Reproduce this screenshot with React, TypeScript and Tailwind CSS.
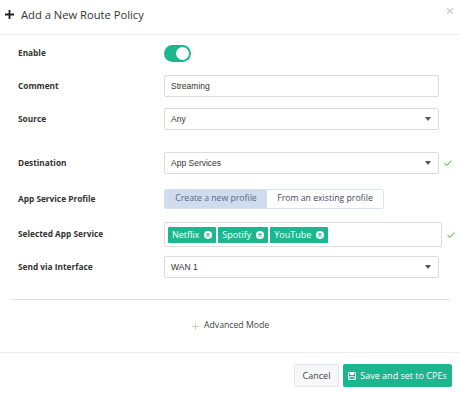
import React from 'react';

const label = 'w-[146px] shrink-0 text-[8.3px] font-bold text-[#333]';
const field =
  'flex h-[22px] w-[275px] shrink-0 items-center rounded-[2px] border border-[#dcdcdc] bg-white px-[6px] text-[8.5px] text-[#333] font-["Liberation_Sans",sans-serif]';

function Caret() {
  return (
    <svg width="6" height="4" viewBox="0 0 6 4" className="ml-auto mr-[1px]">
      <path d="M0 0h6L3 4z" fill="#555" />
    </svg>
  );
}

function Check() {
  return (
    <svg width="8" height="6" viewBox="0 0 8 6" className="ml-[5px] shrink-0">
      <path d="M0.5 3.2L2.8 5.3L7.5 0.7" fill="none" stroke="#6fbf5f" strokeWidth="1.1" />
    </svg>
  );
}

function Tag({ name }: { name: string }) {
  return (
    <span className="flex h-[16px] items-center gap-[5px] rounded-[1px] bg-[#1cb78f] px-[4px] text-[9px] text-white">
      {name}
      <svg width="8" height="8" viewBox="0 0 8 8">
        <circle cx="4" cy="4" r="4" fill="#fff" />
        <path d="M2.5 2.5l3 3M5.5 2.5l-3 3" stroke="#1cb78f" strokeWidth="1.2" />
      </svg>
    </span>
  );
}

export default function App() {
  return (
    <div className="h-[393px] w-[460px] bg-white font-['Open_Sans',sans-serif] text-[#333]">
      <div className="flex h-[35px] items-start border-b border-[#ededed] pl-[5px] pr-[5px] pt-[6px]">
        <svg width="9" height="9" viewBox="0 0 9 9" className="mt-[4px]">
          <path d="M4.5 0v9M0 4.5h9" stroke="#222" strokeWidth="1.8" />
        </svg>
        <span className="ml-[7px] text-[11.2px] leading-[17px] text-[#333]">Add a New Route Policy</span>
        <svg width="6" height="6" viewBox="0 0 6 6" className="ml-auto mr-[2px] mt-[2px]">
          <path d="M0 0l6 6M6 0L0 6" stroke="#c4c4c4" strokeWidth="1.2" />
        </svg>
      </div>

      <div className="pl-[18px] pr-[4px] pt-[10px]">
        <div className="flex h-[17px] items-center">
          <span className={label}>Enable</span>
          <span className="flex h-[17px] w-[27px] items-center justify-end rounded-full bg-[#1cb68e] pr-[2px]">
            <span className="h-[13px] w-[13px] rounded-full bg-white" />
          </span>
        </div>

        <div className="mt-[13px] flex items-center">
          <span className={label}>Comment</span>
          <div className={field}>Streaming</div>
        </div>

        <div className="mt-[11px] flex items-center">
          <span className={label}>Source</span>
          <div className={field}>
            Any
            <Caret />
          </div>
        </div>

        <div className="mt-[22px] flex items-center">
          <span className={label}>Destination</span>
          <div className={field + ' border-[#a9d892]'}>
            App Services
            <Caret />
          </div>
          <Check />
        </div>

        <div className="mt-[15px] flex items-center">
          <span className={label}>App Service Profile</span>
          <div className="flex h-[20px] rounded-[2px] border border-[#d9e2ee] text-[8.7px]">
            <span className="flex w-[102px] items-center justify-center bg-[#cfdcee] text-[#556a86]">
              Create a new profile
            </span>
            <span className="flex w-[116px] items-center justify-center bg-white text-[#3c4a5c]">
              From an existing profile
            </span>
          </div>
        </div>

        <div className="mt-[13px] flex items-center">
          <span className={label}>Selected App Service</span>
          <div className="flex h-[25px] w-[278px] shrink-0 items-center gap-[2px] rounded-[2px] border border-[#dcdcdc] bg-white px-[3px]">
            <Tag name="Netflix" />
            <Tag name="Spotify" />
            <Tag name="YouTube" />
          </div>
          <Check />
        </div>

        <div className="mt-[9px] flex items-center">
          <span className={label}>Send via Interface</span>
          <div className={field}>
            WAN 1
            <Caret />
          </div>
        </div>
      </div>

      <div className="mx-[10px] mt-[21px] border-t border-[#e2e2e2]" />

      <div className="flex h-[52px] items-center pl-[192px] text-[8.7px] text-[#444]">
        <svg width="7" height="7" viewBox="0 0 7 7" className="mr-[5px]">
          <path d="M3.5 0v7M0 3.5h7" stroke="#c2c2c2" strokeWidth="0.8" />
        </svg>
        Advanced Mode
      </div>

      <div className="flex justify-end gap-[4px] border-t border-[#eeeeee] pr-[8px] pt-[11px]">
        <button className="h-[23px] w-[45px] rounded-[2px] border border-[#e6e6e6] bg-[#f6f7f9] text-[9px] text-[#444]">
          Cancel
        </button>
        <button className="flex h-[23px] w-[109px] items-center justify-center gap-[4px] rounded-[2px] bg-[#1cb68e] text-[9px] text-white">
          <svg width="8" height="8" viewBox="0 0 8 8">
            <rect x="0.5" y="0.5" width="7" height="7" rx="0.5" fill="none" stroke="#fff" strokeWidth="1" />
            <rect x="2" y="0.5" width="4" height="2.5" fill="#fff" />
            <rect x="2" y="4.5" width="4" height="3" fill="none" stroke="#fff" strokeWidth="0.8" />
          </svg>
          Save and set to CPEs
        </button>
      </div>
    </div>
  );
}
